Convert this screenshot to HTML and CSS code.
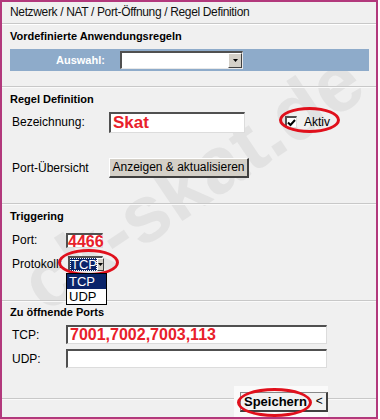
FILE: index.html
```html
<!DOCTYPE html>
<html>
<head>
    <title>Regel Definition</title>
    <link rel="stylesheet" href="styles.css">
</head>
<body>
<div class="frame">
    <div class="watermark">ck-skat.de</div>

    <div class="title">Netzwerk / NAT / Port-Öffnung / Regel Definition</div>

    <div class="section s-predef">
        <div class="head">Vordefinierte Anwendungsregeln</div>
        <div class="bar">
            <span class="bar-label">Auswahl:</span>
            <div class="combo combo-wide">
                <span class="combo-text"></span>
                <span class="combo-btn"><svg width="5" height="3" viewBox="0 0 5 3"><path d="M0 0h5L2.5 3z" fill="#000"/></svg></span>
            </div>
        </div>
    </div>

    <div class="section s-rule">
        <div class="head">Regel Definition</div>
        <div class="row row-name">
            <span class="label label-wide">Bezeichnung:</span>
            <div class="field field-name">Skat</div>
            <div class="check-wrap">
                <span class="checkbox"><svg width="9" height="8" viewBox="0 0 9 8"><path d="M1 3.5l2.5 2.5L8 1" stroke="#000" stroke-width="2" fill="none"/></svg></span>
                <span class="check-text">Aktiv</span>
                <span class="ring ring-aktiv"></span>
            </div>
        </div>
        <div class="row row-ports">
            <span class="label label-wide">Port-Übersicht</span>
            <span class="btn">Anzeigen &amp; aktualisieren</span>
        </div>
    </div>

    <div class="section s-trigger">
        <div class="head">Triggering</div>
        <div class="row row-trig">
            <span class="label label-short">Port:</span>
            <div class="field field-port">4466</div>
        </div>
        <div class="row row-trig">
            <span class="label label-proto">Protokoll:</span>
            <div class="proto-wrap">
                <div class="combo combo-proto">
                    <span class="combo-text sel">TCP</span>
                    <span class="combo-btn"><svg width="5" height="3" viewBox="0 0 5 3"><path d="M0 0h5L2.5 3z" fill="#000"/></svg></span>
                </div>
                <span class="ring ring-proto"></span>
                <div class="dropdown">
                    <div class="opt opt-on">TCP</div>
                    <div class="opt">UDP</div>
                </div>
            </div>
        </div>
    </div>

    <div class="section s-open">
        <div class="head head-open">Zu öffnende Ports</div>
        <div class="row row-open first">
            <span class="label label-short">TCP:</span>
            <div class="field field-long">7001,7002,7003,113</div>
        </div>
        <div class="row row-open">
            <span class="label label-short">UDP:</span>
            <div class="field field-long"></div>
        </div>
    </div>

    <div class="footer">
        <div class="save-panel">
            <span class="save-btn"><span class="save-text">Speichern</span><span class="save-arrow">&lt;</span></span>
            <span class="ring ring-save"></span>
        </div>
    </div>
</div>
</body>
</html>
```

FILE: styles.css
```css
body{
    margin: 0;
    background: #fff;
    font-family: "Liberation Sans", Arial, sans-serif;
    font-size: 12px;
    color: #000;
}
.frame{
    position: relative;
    box-sizing: border-box;
    width: 378px;
    height: 419px;
    border: 2px solid #b2387c;
    background: #f0f0f0;
    display: flex;
    flex-direction: column;
    overflow: hidden;
}
.watermark{
    position: absolute;
    left: 190px;
    top: 180px;
    transform: translate(-50%, -50%) rotate(-34deg);
    font-size: 80px;
    font-weight: bold;
    color: #e2e2e2;
    white-space: nowrap;
    z-index: 0;
}
.title, .section, .footer{
    position: relative;
    z-index: 1;
}
.title{
    box-sizing: border-box;
    height: 22px;
    line-height: 21px;
    padding-left: 8px;
    font-size: 12px;
    letter-spacing: -0.35px;
    color: #111;
    border-bottom: 1px solid #c8c8c8;
    box-shadow: 0 1px 0 #fff;
}
.section{
    box-sizing: border-box;
    padding-left: 8px;
    border-bottom: 1px solid #c8c8c8;
    box-shadow: 0 1px 0 #fafafa;
}
.head{
    height: 24px;
    line-height: 24px;
    font-weight: bold;
    font-size: 11px;
}
.s-predef .head{
    height: 25px;
    line-height: 25px;
}
.s-predef{
    padding-bottom: 15px;
}
.bar{
    height: 22px;
    width: 359px;
    background: #8eabca;
    display: flex;
    align-items: center;
}
.bar-label{
    width: 110px;
    padding-left: 46px;
    box-sizing: border-box;
    color: #fff;
    font-weight: bold;
    font-size: 11px;
}
.combo{
    box-sizing: border-box;
    display: flex;
    background: #fff;
    border-top: 2px solid #505050;
    border-left: 2px solid #505050;
    border-right: 1px solid #e8e8e8;
    border-bottom: 1px solid #e8e8e8;
}
.combo-wide{
    width: 123px;
    height: 18px;
}
.combo-text{
    flex: 1;
}
.combo-btn{
    width: 14px;
    background: #d4d0c8;
    border-left: 1px solid #fff;
    border-top: 1px solid #fff;
    border-right: 1px solid #404040;
    border-bottom: 1px solid #404040;
    box-sizing: border-box;
    display: flex;
    align-items: center;
    justify-content: center;
}
.row{
    display: flex;
    align-items: center;
    padding-left: 2px;
}
.label-wide{
    width: 97px;
}
.label-short{
    width: 54px;
}
.label-proto{
    width: 56px;
}
.row-name{
    height: 22px;
}
.row-ports{
    height: 20px;
    margin-top: 25px;
}
.s-rule{
    padding-bottom: 25px;
}
.field{
    box-sizing: border-box;
    background: #fff;
    border-top: 2px solid #505050;
    border-left: 2px solid #505050;
    border-right: 1px solid #dcdcdc;
    border-bottom: 1px solid #dcdcdc;
    color: #e8202a;
    font-weight: bold;
    white-space: nowrap;
    padding-left: 2px;
}
.field-name{
    width: 136px;
    height: 21px;
    line-height: 18px;
    font-size: 17px;
}
.check-wrap{
    position: relative;
    display: flex;
    align-items: center;
    margin-left: 40px;
}
.checkbox{
    box-sizing: border-box;
    width: 12px;
    height: 12px;
    background: #fff;
    border-top: 2px solid #505050;
    border-left: 2px solid #505050;
    border-right: 1px solid #ddd;
    border-bottom: 1px solid #ddd;
    display: flex;
    align-items: center;
    justify-content: center;
}
.check-text{
    margin-left: 7px;
}
.ring{
    position: absolute;
    box-sizing: border-box;
    border: 3px solid #e0101c;
    border-radius: 50%;
}
.ring-aktiv{
    left: -6px;
    top: -8px;
    width: 61px;
    height: 26px;
}
.btn{
    box-sizing: border-box;
    width: 140px;
    height: 20px;
    line-height: 17px;
    text-align: center;
    background: #d4d0c8;
    border-top: 1px solid #fff;
    border-left: 1px solid #fff;
    border-right: 2px solid #404040;
    border-bottom: 2px solid #404040;
}
.s-trigger{
    padding-bottom: 24px;
}
.row-trig{
    height: 24px;
}
.field-port{
    width: 37px;
    height: 15px;
    line-height: 13px;
    font-size: 16px;
    padding-left: 0;
    overflow: visible;
}
.proto-wrap{
    position: relative;
}
.combo-proto{
    width: 35px;
    height: 16px;
    border-right: 1px solid #ddd;
}
.combo-text.sel{
    background: #0a246a;
    color: #fff;
    font-size: 13px;
    line-height: 13px;
    padding-left: 1px;
    outline: 1px dotted #fff;
    outline-offset: -1px;
}
.combo-proto .combo-btn{
    width: 9px;
}
.ring-proto{
    left: -10px;
    top: -7px;
    width: 61px;
    height: 27px;
}
.dropdown{
    position: absolute;
    left: -2px;
    top: 17px;
    width: 41px;
    box-sizing: border-box;
    border: 1px solid #000;
    background: #fff;
    z-index: 2;
}
.opt{
    height: 15px;
    line-height: 15px;
    font-size: 13px;
    padding-left: 2px;
}
.opt-on{
    background: #0a246a;
    color: #fff;
}
.head-open{
    height: 22px;
    line-height: 22px;
}
.s-open{
    padding-bottom: 30px;
}
.row-open{
    height: 19px;
    margin-top: 5px;
}
.row-open.first{
    margin-top: 2px;
}
.field-long{
    width: 261px;
    height: 19px;
    line-height: 16px;
    font-size: 16px;
}
.footer{
    flex: 1;
    display: flex;
    justify-content: flex-end;
    padding-right: 48px;
}
.save-panel{
    position: relative;
    margin-top: -13px;
    width: 94px;
    height: 31px;
    background: #fafafa;
    display: flex;
    align-items: center;
    justify-content: flex-end;
}
.save-btn{
    box-sizing: border-box;
    width: 88px;
    height: 20px;
    display: flex;
    align-items: center;
    background: #f2f2f2;
    border-top: 1px solid #888;
    border-left: 1px solid #888;
    border-right: 2px solid #404040;
    border-bottom: 2px solid #404040;
}
.save-text{
    font-weight: bold;
    font-size: 13px;
    margin-left: 3px;
}
.save-arrow{
    margin-left: 9px;
    font-size: 12px;
}
.ring-save{
    left: 3px;
    top: 2px;
    width: 75px;
    height: 29px;
}
```
